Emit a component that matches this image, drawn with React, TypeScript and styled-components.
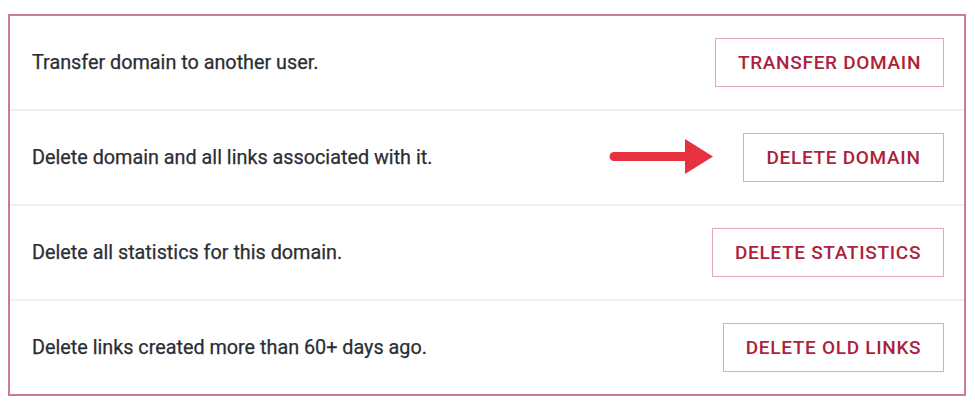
import React from 'react'
import styled, { createGlobalStyle } from 'styled-components'

const GlobalStyle = createGlobalStyle`
  body {
    margin: 0;
    background: #ffffff;
    font-family: Roboto, 'Liberation Sans', Arial, sans-serif;
  }
`

const Page = styled.div`
  padding: 14px 9px 12px 8px;
`

const Panel = styled.div`
  border: 2px solid #c97d8e;
  display: flex;
  flex-direction: column;
`

const Row = styled.div`
  position: relative;
  height: 93px;
  display: flex;
  align-items: center;
  justify-content: space-between;
  padding: 0 20px 0 22px;
  & + & {
    border-top: 2px solid #efefef;
  }
`

const Label = styled.span`
  font-size: 19.8px;
  color: #2a2e33;
  -webkit-text-stroke: 0.25px #2a2e33;
`

const ActionButton = styled.button<{ $width: number }>`
  width: ${({ $width }) => $width}px;
  height: 49px;
  background: #ffffff;
  border: 1px solid #e2a9b5;
  color: #ad1f3c;
  font-family: Roboto, 'Liberation Sans', Arial, sans-serif;
  font-size: 19px;
  font-weight: 500;
  letter-spacing: 0.7px;
  text-transform: uppercase;
  cursor: pointer;
`

const Pointer = styled.svg`
  position: absolute;
  left: 598px;
  top: 28px;
`

const actions = [
  { label: 'Transfer domain to another user.', button: 'Transfer domain', width: 229 },
  { label: 'Delete domain and all links associated with it.', button: 'Delete domain', width: 201, arrow: true },
  { label: 'Delete all statistics for this domain.', button: 'Delete statistics', width: 232 },
  { label: 'Delete links created more than 60+ days ago.', button: 'Delete old links', width: 221 },
]

const App: React.FC = () => {
  return (
    <Page>
      <GlobalStyle />
      <Panel>
        {actions.map((a) => (
          <Row key={a.button}>
            <Label>{a.label}</Label>
            {a.arrow && (
              <Pointer width="106" height="36" viewBox="0 0 106 36">
                <path d="M6 13 H77 V0 L105 17.5 L77 35 V22 H6 A4.5 4.5 0 0 1 6 13 Z" fill="#e6323f" />
              </Pointer>
            )}
            <ActionButton $width={a.width}>{a.button}</ActionButton>
          </Row>
        ))}
      </Panel>
    </Page>
  )
}

export default App
